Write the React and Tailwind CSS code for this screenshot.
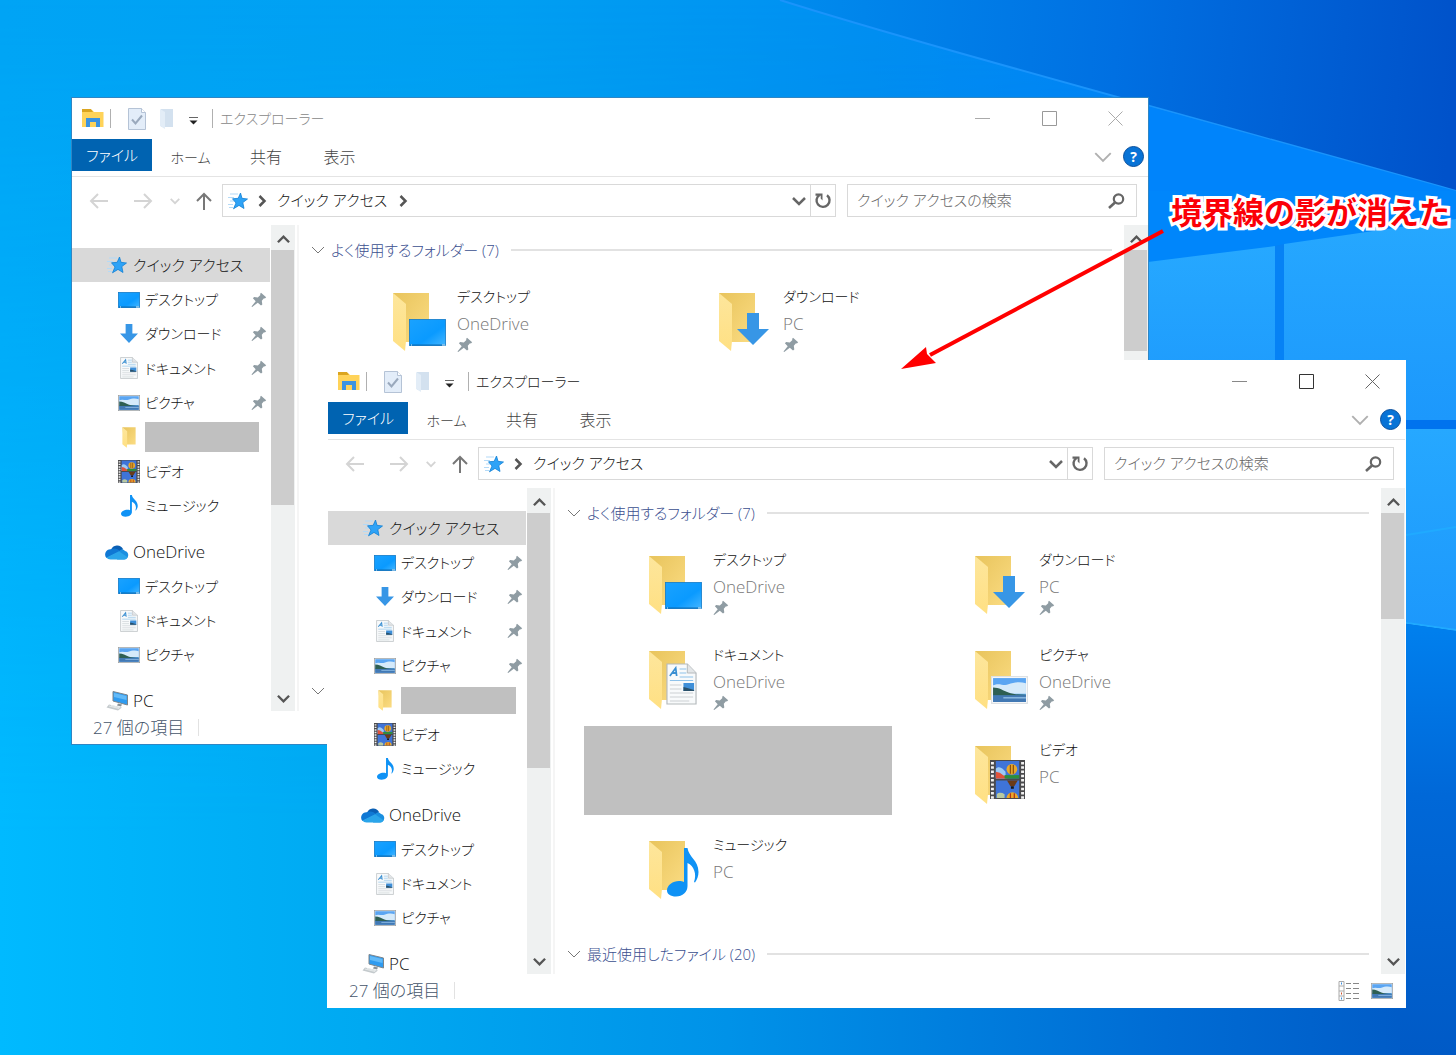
import { useState } from "react";

// === ICONOS ===
function Gradients() {
  return (
    <svg className="absolute h-0 w-0" aria-hidden="true">
      <defs>
        <linearGradient id="gSky" x1="0" y1="0" x2="1" y2="0">
          <stop offset="0" stopColor="#00a4f5" />
          <stop offset="0.35" stopColor="#009ff2" />
          <stop offset="0.6" stopColor="#008ff2" />
          <stop offset="0.8" stopColor="#0084fa" />
          <stop offset="1" stopColor="#0078f8" />
        </linearGradient>
        <linearGradient id="gBottom" x1="0" y1="0" x2="1" y2="0">
          <stop offset="0" stopColor="#00baff" />
          <stop offset="0.25" stopColor="#00a9f1" />
          <stop offset="0.5" stopColor="#0092e8" />
          <stop offset="0.8" stopColor="#006cd4" />
          <stop offset="1" stopColor="#0058c4" />
        </linearGradient>
        <linearGradient id="gFade" x1="0" y1="0" x2="0" y2="1">
          <stop offset="0" stopColor="#fff" stopOpacity="0" />
          <stop offset="0.8" stopColor="#fff" />
        </linearGradient>
        <mask id="mBottom">
          <rect width="1456" height="1055" fill="url(#gFade)" />
        </mask>
        <linearGradient id="gBeam" x1="780" y1="0" x2="1456" y2="60" gradientUnits="userSpaceOnUse">
          <stop offset="0" stopColor="#008cee" />
          <stop offset="0.5" stopColor="#0070e2" />
          <stop offset="1" stopColor="#0052ca" />
        </linearGradient>
        <linearGradient id="gPane" x1="0" y1="0" x2="0" y2="1">
          <stop offset="0" stopColor="#26a8ff" />
          <stop offset="1" stopColor="#1c98fc" />
        </linearGradient>
        <linearGradient id="gScreen" x1="0" y1="0" x2="1" y2="1">
          <stop offset="0" stopColor="#1aa2ff" />
          <stop offset="0.6" stopColor="#0a9aff" />
          <stop offset="1" stopColor="#45b6ff" />
        </linearGradient>
        <linearGradient id="gBack" x1="0" y1="0" x2="1" y2="1">
          <stop offset="0" stopColor="#e8c45c" />
          <stop offset="1" stopColor="#fbdc83" />
        </linearGradient>
        <linearGradient id="gFlap" x1="0" y1="0" x2="0" y2="1">
          <stop offset="0" stopColor="#fde69c" />
          <stop offset="1" stopColor="#ffe083" />
        </linearGradient>
      </defs>
    </svg>
  );
}

function StarIcon() {
  return (
    <svg width="20" height="18" viewBox="0 0 20 18">
      <path d="M2 2h8M0 5.500h6M2 9h4M0 12.500h5M1 15.500h4" stroke="#b4daf7" strokeWidth="1.200" />
      <path d="M12.500 1 14 6.300 19.500 7 14.800 10.600 16 16.500 11 13.400 5.500 16.800 8 11 4.500 6.800 10.200 6.300z" fill="#2ea3f7" stroke="#1280d4" strokeWidth="0.800" />
    </svg>
  );
}

function ScreenIcon({ width = 22, height = 16 }) {
  return (
    <svg width={width} height={height} viewBox={`0 0 ${width} ${height}`}>
      <rect x="0.500" y="0.500" width={width - 1} height={height - 1} fill="url(#gScreen)" stroke="#1179c8" strokeWidth="0.800" />
      <path d={`M1 ${height - 1}h${width - 2}`} stroke="#0b6cb5" />
      <path d={`M2 ${height - 1}h1M${width - 4} ${height - 1}h3`} stroke="#d8f0ff" />
    </svg>
  );
}

function DownloadIcon({ width = 18, height = 19 }) {
  return (
    <svg width={width} height={height} viewBox="0 0 32 32" preserveAspectRatio="none">
      <path d="M10 0h12v16h10L16 32 0 16h10z" fill="#3796e6" />
    </svg>
  );
}

function DocumentIcon({ width = 18, height = 22 }) {
  return (
    <svg width={width} height={height} viewBox="0 0 32 42" preserveAspectRatio="none">
      <path d="M1 1h21l9 9v31H1z" fill="#f8fafb" stroke="#b4b9bc" strokeWidth="1.200" />
      <path d="M22 1v9h9" fill="#e3e6e8" stroke="#b4b9bc" />
      <path d="m4 13 6-8 1 8M6 10h5" fill="none" stroke="#3a8fd2" strokeWidth="1.800" />
      <path d="M14 6h7M14 10h7M14 14h14M4 17.500h24" stroke="#8ec2ea" strokeWidth="1.200" />
      <path d="M4 22h12M4 26h12M4 30h24M4 34h24M4 38h20" stroke="#cbd0d3" strokeWidth="1.200" />
      <path d="M18 20h11v8H18z" fill="#3f8fd8" />
      <path d="m18 24 4 1 7 2v1H18z" fill="#29506a" />
    </svg>
  );
}

function PictureIcon({ width = 22, height = 16, frame = "#9a9fa3" }) {
  return (
    <svg width={width} height={height} viewBox="0 0 36 27" preserveAspectRatio="none">
      <rect x="0.500" y="0.500" width="35" height="26" fill="#fff" stroke={frame} strokeWidth="1.500" />
      <rect x="2" y="2" width="32" height="23" fill="#5aa5f2" />
      <path d="M2 9c6-3 10 1 15-1s11-3 17-1v10H2z" fill="#d5eafa" />
      <path d="M2 11c6 0 10 3 15 5s11 2 17 2v1H2z" fill="#2e5f52" />
      <path d="M2 18.500h32V25H2z" fill="#4279b4" />
      <path d="M12 21h22" stroke="#86b6df" strokeWidth="1.500" />
    </svg>
  );
}

function FolderIcon({ width = 14, height = 21 }) {
  return (
    <svg width={width} height={height} viewBox="0 0 38 60" preserveAspectRatio="none">
      <path d="M1 1h36v49H6z" fill="url(#gBack)" />
      <path d="m1 1 13 11v37l-1 10L1 49z" fill="url(#gFlap)" />
    </svg>
  );
}

function VideoIcon({ width = 22, height = 23 }) {
  return (
    <svg width={width} height={height} viewBox="0 0 36 40" preserveAspectRatio="none">
      <path d="M0 0h36v40H0z" fill="#4a4a4c" />
      <path d="M6 1h24v18H6zM6 21h24v18H6z" fill="#3f74d8" />
      <path d="M2.500 2v38M33.500 2v38" stroke="#f1f1f1" strokeWidth="3" strokeDasharray="2.500 1.900" />
      <path d="M6 9c3-3 5-1 7 0l3 3v7H6z" fill="#9ccbf5" />
      <path d="M6 12l4 1 4 3 4 1v2H6z" fill="#e0533b" />
      <path d="M15 15.500h15V19H15z" fill="#2c8f3b" />
      <circle cx="22.500" cy="9.500" r="5.500" fill="#e9a92c" />
      <path d="M21 5v9M24 5v9" stroke="#8c5010" strokeWidth="1.300" />
      <path d="M17.500 21h11l-3.500 6h-4z" fill="#6b3b18" />
      <path d="M21.500 27h3v2.500h-3z" fill="#161616" />
      <path d="M17 39a6 6 0 0 1 12 0z" fill="#e9a92c" />
      <path d="M21 34v5M25 34v5" stroke="#b23418" strokeWidth="1.300" />
      <path d="M7 35c2-2 5-2 8 0v4H7z" fill="#b9c9a0" />
    </svg>
  );
}

function MusicIcon({ width = 17, height = 22 }) {
  return (
    <svg width={width} height={height} viewBox="0 0 32 49" preserveAspectRatio="none">
      <path d="M17 0h3.500c1 9 11 12 11 24 0 4-1.500 8-3.500 10.500l-1-.5c3-8 0-16-6.500-19V38c0 6-5 10.500-11.500 10.500C3.500 48.500 0 46 0 42.500 0 37 6 33 12 33c2 0 3.500.3 5 1z" fill="#0f92f5" />
    </svg>
  );
}

function CloudIcon() {
  return (
    <svg width="24" height="16" viewBox="0 0 24 16">
      <path d="M6 6a6.500 6.500 0 0 1 12-1l-4 6z" fill="#0a5fb4" />
      <path d="M5.500 5.200A5.300 5.300 0 0 0 1.500 14l14-6.500C13 4.500 9 3.800 5.500 5.200z" fill="#0f78d4" />
      <path d="M14 7.500c1.500-3 5-2.500 6-.5 4.500.8 4.500 8-1 8.500H12z" fill="#1a8fe0" />
      <path d="M1.500 13.500 14 7.300l8.600 5.900c-.8 1.400-2 2.300-3.800 2.300H5.500c-1.800 0-3.200-.8-4-2z" fill="#2aa5ea" />
    </svg>
  );
}

function PcIcon() {
  return (
    <svg width="23" height="20" viewBox="0 0 23 20">
      <path d="m7 .5 14.500 3.500v10L7 10z" fill="#2f9bf0" stroke="#7d858b" />
      <path d="m8 2 12.500 3v4L8 6z" fill="#62baf8" />
      <path d="m12 12.500 4 1-1 2-4-1z" fill="#8a9196" />
      <path d="m3 13.500 13 3-4 3-11.500-3z" fill="#c4cacd" />
      <path d="m3 15 10 2.500M5 14.300l9 2.500" stroke="#f4f6f7" strokeWidth="0.700" />
    </svg>
  );
}

function PinIcon() {
  return (
    <svg width="16" height="16" viewBox="0 0 16 16">
      <path d="m10 .8 5.200 4.400-1.300 1.200-.9-.2-2.200 2.600.5 3.700-1.300 1-3.200-2.800L1.200 15l-.7-.5 4.200-5.300L1.900 6.300l1.200-1.200 3.700.4 2.600-2.600-.3-1z" fill="#8f9ca3" />
    </svg>
  );
}

function Chevron({ size = 14, dir = "down", width = 1, color = "#555" }) {
  const paths = {
    down: "M1 4l6 6 6-6",
    up: "M1 10l6-6 6 6",
    right: "M4.500 2l5 5-5 5",
  };
  return (
    <svg width={size} height={size} viewBox="0 0 14 14">
      <path d={paths[dir]} fill="none" stroke={color} strokeWidth={width} />
    </svg>
  );
}

function Arrow({ dir = "left", color = "#d4d4d4" }) {
  const paths = {
    left: "M19 9H2M9 2 2 9l7 7",
    right: "M1 9h17M11 2l7 7-7 7",
    up: "M10 18V2M3 9l7-7 7 7",
  };
  return (
    <svg width="20" height="18" viewBox="0 0 20 18">
      <path d={paths[dir]} fill="none" stroke={color} strokeWidth="2" />
    </svg>
  );
}

// === DATOS ===
const quickItems = [
  { name: "デスクトップ", icon: <ScreenIcon />, pinned: true },
  { name: "ダウンロード", icon: <DownloadIcon />, pinned: true },
  { name: "ドキュメント", icon: <DocumentIcon />, pinned: true },
  { name: "ピクチャ", icon: <PictureIcon />, pinned: true },
  { hidden: true, icon: <FolderIcon /> },
  { name: "ビデオ", icon: <VideoIcon /> },
  { name: "ミュージック", icon: <MusicIcon /> },
];

const cloudItems = [
  { name: "デスクトップ", icon: <ScreenIcon /> },
  { name: "ドキュメント", icon: <DocumentIcon /> },
  { name: "ピクチャ", icon: <PictureIcon /> },
];

const folders = [
  { name: "デスクトップ", place: "OneDrive", pinned: true, icon: <ScreenIcon width={37} height={27} />, pos: "left-[17px] top-[27px]" },
  { name: "ダウンロード", place: "PC", pinned: true, icon: <DownloadIcon width={32} height={32} />, pos: "left-[19px] top-[21px]" },
  { name: "ドキュメント", place: "OneDrive", pinned: true, icon: <DocumentIcon width={31} height={42} />, pos: "left-[18px] top-[13px]" },
  { name: "ピクチャ", place: "OneDrive", pinned: true, icon: <PictureIcon width={37} height={28} frame="#dde1e4" />, pos: "left-[17px] top-[26px]" },
  { hidden: true },
  { name: "ビデオ", place: "PC", icon: <VideoIcon width={35} height={39} />, pos: "left-[16px] top-[15px]" },
  { name: "ミュージック", place: "PC", icon: <MusicIcon width={32} height={49} />, pos: "left-[19px] top-[8px]" },
];

// === COMPONENTES ===
function NavItem({ item, root, selected, redacted, size = "text-[14px]" }) {
  return (
    <li className={selected ? "bg-[#d9d9d9]" : ""}>
      <button type="button" className={`flex h-full w-full items-center gap-1 pr-[3px] text-left ${size} ${root ? "pl-[33px]" : "pl-[45px]"}`}>
        <span className="flex w-6 shrink-0 justify-center">{item.icon}</span>
        {item.hidden ? <span className={`bg-[#c0c0c0] ${redacted}`} /> : <span className="grow whitespace-nowrap">{item.name}</span>}
        {item.pinned && <PinIcon />}
      </button>
    </li>
  );
}

function Scrollbar({ thumb }) {
  return (
    <div className="flex w-6 shrink-0 flex-col bg-[#eff1f1]">
      <button type="button" aria-label="上へ" className="flex h-[25px] shrink-0 items-center justify-center pt-1">
        <Chevron dir="up" size={13} width={2.5} />
      </button>
      <div className={`mr-px bg-[#cdcdcd] ${thumb}`} />
      <button type="button" aria-label="下へ" className="mt-auto flex h-[25px] shrink-0 items-center justify-center">
        <Chevron size={13} width={2.5} />
      </button>
    </div>
  );
}

function GroupHeading({ children }) {
  return (
    <h2 className="flex h-[26px] items-center pl-[12px] pr-3 text-[15px] font-normal text-[#3b4f8f]">
      <Chevron color="#777" />
      <span className="ml-[6px] mr-[12px] whitespace-nowrap font-light">{children}</span>
      <span className="h-[2px] grow bg-[#e2e2e2]" />
    </h2>
  );
}

function FolderTile({ folder }) {
  if (folder.hidden) {
    return <li className="h-[95px] pr-[18px]"><div className="h-[89px] bg-[#c0c0c0]" /></li>;
  }
  return (
    <li className="flex h-[95px] pl-16 pt-[10px]">
      <div className="relative mt-[9px] w-[65px] shrink-0">
        <FolderIcon width={38} height={60} />
        <span className={`absolute ${folder.pos}`}>{folder.icon}</span>
      </div>
      <div className="whitespace-nowrap leading-[27px]">
        <p className="text-[14px] text-[#111]">{folder.name}</p>
        <p className="text-[17px] text-[#777]">{folder.place}</p>
        {folder.pinned && <PinIcon />}
      </div>
    </li>
  );
}

function ExplorerWindow({ active, className, redacted, thumb }) {
  const [query, setQuery] = useState("");
  const caption = active ? "#333" : "#999";

  return (
    <section className={`absolute border bg-white ${className}`}>
      {/* BARRA DE TÍTULO */}
      <header className="flex h-[41px] items-center">
        <div className="flex items-center pl-[10px]">
          <svg width="22" height="19" viewBox="0 0 22 19">
            <path d="M0 1h10l2 2h9.500v15H0z" fill="#ffd359" />
            <path d="M0 0h9l2 3H0z" fill="#dba520" />
            <path d="M4 18V9h14v9h-4v-5H8v5z" fill="#3b93e0" />
          </svg>
          <span className="ml-[6px] h-[19px] w-px bg-[#b0b0b0]" />
          <button type="button" aria-label="プロパティ" className="ml-[17px]">
            <svg width="18" height="22" viewBox="0 0 18 22">
              <path d="M.5.500h13l4 4v17H.5z" fill="#e3edf9" stroke="#b5c3d6" />
              <path d="M13.500.500v4h4" fill="#fff" stroke="#b5c3d6" />
              <path d="m4 11.500 3.500 4 6.500-8" fill="none" stroke="#9aa9bd" strokeWidth="2" />
            </svg>
          </button>
          <button type="button" aria-label="新しいフォルダー" className="ml-[14px]">
            <svg width="14" height="20" viewBox="0 0 14 20">
              <path d="M1 0h12v18H1z" fill="#d3e1ef" />
              <path d="m0 0 5 3v17l-5-3z" fill="#e3edf7" />
            </svg>
          </button>
          <button type="button" aria-label="カスタマイズ" className="ml-[14px] pt-1">
            <svg width="11" height="9" viewBox="0 0 11 9">
              <path d="M1 1.500h9" stroke="#666" />
              <path d="M1.500 4.500h8l-4 4z" fill="#222" />
            </svg>
          </button>
          <span className="ml-[13px] h-[19px] w-px bg-[#b0b0b0]" />
          <h1 className={`ml-[7px] whitespace-nowrap text-[14px] ${active ? "text-[#222]" : "text-[#888]"}`}>エクスプローラー</h1>
        </div>
        <div className="ml-auto flex h-full">
          <button type="button" aria-label="最小化" className="flex w-[67px] items-center justify-center">
            <svg width="15" height="15"><path d="M0 7.500h15" stroke={active ? "#888" : "#aaa"} /></svg>
          </button>
          <button type="button" aria-label="最大化" className="flex w-[67px] items-center justify-center">
            <svg width="15" height="15"><path d="M.5.500h14v14H.5z" fill="none" stroke={caption} /></svg>
          </button>
          <button type="button" aria-label="閉じる" className="flex w-[65px] items-center justify-center">
            <svg width="15" height="15"><path d="m.5.500 14 14M14.500.500l-14 14" stroke={active ? "#666" : "#aaa"} /></svg>
          </button>
        </div>
      </header>

      {/* CINTA */}
      <nav className="flex h-[38px] border-b border-[#e4e4e4] text-[#444]">
        <button type="button" className="h-8 w-[80px] bg-[#0063b1] text-[15px] text-white">ファイル</button>
        <button type="button" className="h-9 w-[77px] text-[14px]">ホーム</button>
        <button type="button" className="h-9 w-[74px]">共有</button>
        <button type="button" className="h-9 w-[73px]">表示</button>
        <button type="button" aria-label="リボンの展開" className="ml-auto h-9">
          <Chevron size={18} color="#b0b0b0" width={1.500} />
        </button>
        <button type="button" aria-label="ヘルプ" className="ml-[11px] mr-1 mt-[7px] size-[21px] rounded-full border border-[#0a4f9c] bg-[#0873d6] text-sm font-bold leading-[18px] text-white">?</button>
      </nav>

      {/* BARRA DE DIRECCIONES */}
      <div className="flex h-[47px] items-center pl-[17px] pr-[11px]">
        <button type="button" aria-label="戻る"><Arrow /></button>
        <button type="button" aria-label="進む" className="ml-6"><Arrow dir="right" /></button>
        <button type="button" aria-label="履歴" className="ml-[17px]"><Chevron size={10} width={2.500} color="#d4d4d4" /></button>
        <button type="button" aria-label="上の階層" className="ml-[14px]"><Arrow dir="up" color="#777" /></button>
        <div className="ml-2 flex h-[33px] grow items-center border border-[#d9d9d9] pl-[5px] text-[15px] text-[#111]">
          <StarIcon />
          <span className="ml-[7px] mr-2"><Chevron dir="right" width={2.500} /></span>
          <span className="whitespace-nowrap">クイック アクセス</span>
          {!active && <span className="ml-[9px]"><Chevron dir="right" width={2.500} /></span>}
          <button type="button" aria-label="以前の場所" className="ml-auto mr-1"><Chevron width={2.500} color="#666" /></button>
          <button type="button" aria-label="更新" className="flex h-full w-[25px] items-center justify-center border-l border-[#d9d9d9]">
            <svg width="18" height="18" viewBox="0 0 18 18">
              <path d="M13 3.200a6.500 6.500 0 1 1-7.500-.3" fill="none" stroke="#666" strokeWidth="2.400" />
              <path d="M1.500 1.500h7v7L6.700 6.500V3.700H1.500z" fill="#666" />
            </svg>
          </button>
        </div>
        <label className="ml-[11px] flex h-[33px] w-[290px] items-center border border-[#d9d9d9] pl-[9px] pr-[11px] text-[15px]">
          <input
            type="text"
            aria-label="検索"
            placeholder="クイック アクセスの検索"
            value={query}
            onChange={(e) => setQuery(e.target.value)}
            className="min-w-0 grow outline-none placeholder:text-[#666]"
          />
          <svg width="17" height="16" viewBox="0 0 17 16">
            <circle cx="10.500" cy="6" r="4.700" fill="none" stroke="#666" strokeWidth="2.200" />
            <path d="M7 9.500 1 15" stroke="#666" strokeWidth="2.600" />
          </svg>
        </label>
      </div>

      {/* CONTENIDO */}
      <div className="mt-px flex h-[486px] overflow-hidden">
        <aside className="w-[199px] shrink-0 pr-px pt-[23px] text-[#111]">
          <ul className="grid h-[275px] auto-rows-fr">
            <NavItem root selected size="text-[15px]" item={{ name: "クイック アクセス", icon: <StarIcon /> }} />
            {quickItems.map((item, i) => <NavItem key={i} item={item} redacted={redacted} />)}
          </ul>
          <ul className="mt-3 grid h-[137px] auto-rows-fr">
            <NavItem root size="text-[17px]" item={{ name: "OneDrive", icon: <CloudIcon /> }} />
            {cloudItems.map((item) => <NavItem key={item.name} item={item} />)}
          </ul>
          <ul className="mt-3 grid h-[34px]">
            <NavItem root size="text-[17px]" item={{ name: "PC", icon: <PcIcon /> }} />
          </ul>
        </aside>
        <Scrollbar thumb="h-[255px]" />
        <main className="ml-[2px] min-w-0 grow border-l-2 border-[#f5f5f5] pt-3">
          <GroupHeading>よく使用するフォルダー (7)</GroupHeading>
          <ul className="ml-[29px] mt-[10px] grid grid-cols-[326px_326px]">
            {folders.map((folder, i) => <FolderTile key={i} folder={folder} />)}
          </ul>
          <div className="mt-[25px]">
            <GroupHeading>最近使用したファイル (20)</GroupHeading>
          </div>
        </main>
        <Scrollbar thumb={thumb} />
      </div>

      {/* BARRA DE ESTADO */}
      <footer className="flex h-[33px] items-center pl-[21px] pr-3 text-[17px] text-[#44546a]">
        <span className="whitespace-nowrap">27 個の項目</span>
        <span className="ml-[14px] h-[17px] w-px bg-[#e2e2e2]" />
        {active && (
          <div className="ml-auto flex items-center gap-[11px]">
            <button type="button" aria-label="詳細表示">
              <svg width="22" height="20" viewBox="0 0 22 20">
                <path d="M1 .5h5v19H1zM1 5h5M1 10h5M1 15h5" fill="#fff" stroke="#aaa" />
                <path d="M8 2.500h5M15 2.500h6M8 7.500h5M15 7.500h6M8 12.500h5M15 12.500h6M8 17.500h5M15 17.500h6" stroke="#888" />
                <path d="M3 2.500h1M3 17.500h1" stroke="#3b8de0" strokeWidth="2" />
                <path d="M3 12.500h1" stroke="#d0512b" strokeWidth="2" />
              </svg>
            </button>
            <button type="button" aria-label="大きいアイコン"><PictureIcon /></button>
          </div>
        )}
      </footer>
    </section>
  );
}

function Wallpaper() {
  return (
    <svg className="absolute inset-0 h-full w-full" viewBox="0 0 1456 1055" preserveAspectRatio="none" aria-hidden="true">
      <rect width="1456" height="1055" fill="url(#gSky)" />
      <rect width="1456" height="1055" fill="url(#gBottom)" mask="url(#mBottom)" />
      <path d="M780 0C900 38 1100 92 1456 191V0z" fill="url(#gBeam)" />
      <path d="M780 0C900 38 1100 92 1456 191" fill="none" stroke="#1a94fb" strokeWidth="2" />
      <path d="M1140 191h316v240h-316z" fill="#0086fb" />
      <path d="M1140 104 1456 191H1140z" fill="#0084fb" />
      <path d="M1140 263 1275 246v174h-135z" fill="url(#gPane)" />
      <path d="m1284 244 172-25v201h-172z" fill="url(#gPane)" />
      <path d="M1275 246v174h9V244z" fill="#0682f5" />
      <path d="M1140 420h316v9h-316z" fill="#0073ee" />
      <path d="M1284 429h172v202l-172-30z" fill="url(#gPane)" />
      <path d="M1400 536 1456 527M1400 622l56 8" stroke="#20aaff" strokeWidth="2" />
      <path d="m1400 623 56 8v424h-56z" fill="url(#gEdge)" />
      <defs>
        <linearGradient id="gEdge" x1="0" y1="0" x2="0" y2="1">
          <stop offset="0" stopColor="#0080ee" />
          <stop offset="0.4" stopColor="#0068d8" />
          <stop offset="1" stopColor="#005ac6" />
        </linearGradient>
      </defs>
    </svg>
  );
}

function App() {
  return (
    <div className="relative min-h-screen overflow-hidden bg-[#00a4f0] text-base font-light [font-family:'Open_Sans','Noto_Sans_CJK_JP',sans-serif] [font-feature-settings:'palt']">
      <Gradients />
      <Wallpaper />
      <ExplorerWindow className="left-[71px] right-[307px] top-[97px] border-[#2f86c4]" redacted="h-[30px] w-[114px]" thumb="h-[101px]" />
      <ExplorerWindow active className="left-[327px] right-[50px] top-[360px] border-white" redacted="h-[27px] w-[115px]" thumb="h-[106px]" />

      {/* ANOTACIÓN */}
      <svg className="absolute left-[900px] top-[225px]" width="270" height="150" viewBox="0 0 270 150">
        <path d="M263 6 30 130" stroke="#f00" strokeWidth="4" />
        <path d="m1 144 25-22 1 7 9 9z" fill="#f00" />
      </svg>
      <p className="absolute right-[6px] top-[190px] whitespace-nowrap text-[31px] font-bold leading-[44px] text-[#fb0007] [-webkit-text-stroke:6px_white] [font-feature-settings:normal] [paint-order:stroke_fill]">
        境界線の影が消えた
      </p>
    </div>
  );
}

export default App;
